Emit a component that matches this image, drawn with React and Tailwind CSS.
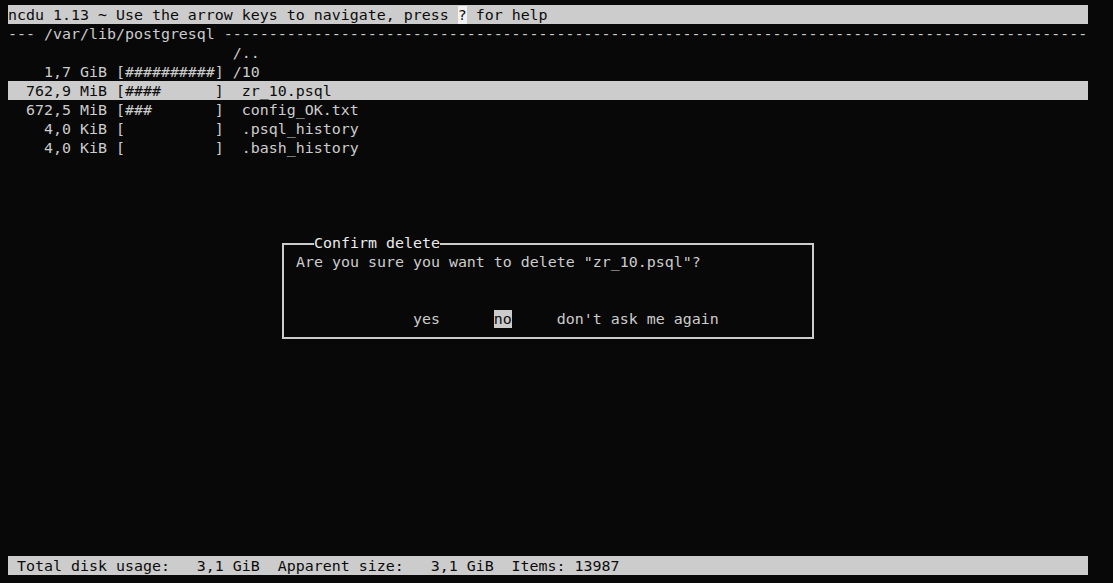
const rows = [
  { text: "                         /..", hl: false },
  { text: "    1,7 GiB [##########] /10", hl: false },
  { text: "  762,9 MiB [####      ]  zr_10.psql", hl: true },
  { text: "  672,5 MiB [###       ]  config_OK.txt", hl: false },
  { text: "    4,0 KiB [          ]  .psql_history", hl: false },
  { text: "    4,0 KiB [          ]  .bash_history", hl: false }
];

function Line({ children, className = "" }) {
  return <div className={`h-[19px] w-[1080px] whitespace-pre pt-[1px] ${className}`}>{children}</div>;
}

export default function App() {
  return (
    <div
      className="min-h-screen w-full bg-[#080808] text-[#cccccc] text-[14.95px] leading-[18px]"
      style={{ fontFamily: '"DejaVu Sans Mono", "Liberation Mono", monospace' }}
    >
      <div className="relative flex h-[583px] flex-col pl-[8px] pt-[5px]">
        {/* header */}
        <Line className="bg-[#cccccc] text-[#0c0c0c]">
          ncdu 1.13 ~ Use the arrow keys to navigate, press{" "}
          <span className="bg-[#f2f2f2]">?</span> for help
        </Line>
        <Line>{"--- /var/lib/postgresql " + "-".repeat(96)}</Line>

        {/* listing */}
        {rows.map((r, i) => (
          <Line key={i} className={r.hl ? "bg-[#cccccc] text-[#0c0c0c]" : ""}>
            {r.text}
          </Line>
        ))}

        <div className="flex-1" />

        {/* status bar */}
        <Line className="mb-[8px] bg-[#cccccc] text-[#0c0c0c]">
          {" Total disk usage:   3,1 GiB  Apparent size:   3,1 GiB  Items: 13987"}
        </Line>

        {/* confirm dialog */}
        <div className="absolute left-[282px] top-[243px] h-[96px] w-[532px] border-2 border-[#cccccc] bg-[#080808]">
          <div className="absolute left-[30px] top-[-11px] whitespace-pre bg-[#080808] text-[#ececec]">
            Confirm delete
          </div>
          <div className="flex flex-col pl-[12px] pt-[8px]">
            <div className="h-[19px] whitespace-pre">Are you sure you want to delete "zr_10.psql"?</div>
            <div className="h-[38px]" />
            <div className="h-[19px] whitespace-pre">
              {"             yes      "}
              <span className="bg-[#cccccc] text-[#0c0c0c]">no</span>
              {"     don't ask me again"}
            </div>
          </div>
        </div>
      </div>
    </div>
  );
}
